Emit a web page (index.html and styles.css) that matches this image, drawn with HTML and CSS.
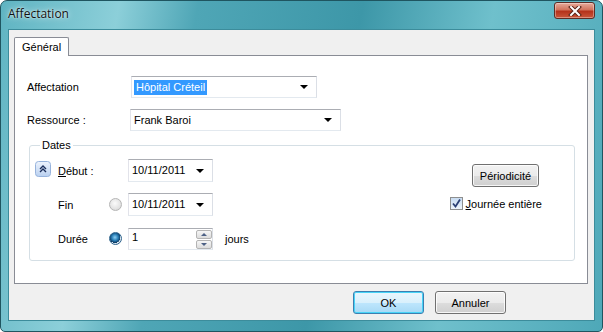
FILE: index.html
```html
<!DOCTYPE html>
<html lang="fr">
<head>
  <meta charset="UTF-8">
  <title>Affectation</title>
  <link rel="stylesheet" href="styles.css">
</head>
<body>
  <div class="window">
    <div class="titlebar">
      <span class="title">Affectation</span>
      <button class="close-btn" type="button">
        <svg width="14" height="10" viewBox="0 0 14 10">
          <path d="M3 1 L11 9 M11 1 L3 9" stroke="#5a2418" stroke-width="4" stroke-linecap="square"/>
          <path d="M3 1 L11 9 M11 1 L3 9" stroke="#fff" stroke-width="2" stroke-linecap="square"/>
        </svg>
      </button>
    </div>
    <div class="client">
      <div class="tabs">
        <div class="tab active">Général</div>
      </div>
      <div class="panel">
        <div class="field-row">
          <label class="field-label">Affectation</label>
          <div class="combo combo-affect">
            <span class="combo-text selected">Hôpital Créteil</span>
            <span class="arrow"></span>
          </div>
        </div>
        <div class="field-row row-ressource">
          <label class="field-label">Ressource :</label>
          <div class="combo combo-res">
            <span class="combo-text">Frank Baroi</span>
            <span class="arrow"></span>
          </div>
        </div>

        <fieldset class="group">
          <legend>Dates</legend>
          <div class="dates">
            <div class="date-grid">
              <span class="collapse-btn">
                <svg width="16" height="16" viewBox="0 0 16 16">
                  <defs>
                    <linearGradient id="cg" x1="0" y1="0" x2="0" y2="1">
                      <stop offset="0" stop-color="#eef4fd"/>
                      <stop offset="1" stop-color="#b9d0f0"/>
                    </linearGradient>
                  </defs>
                  <rect x="0.5" y="0.5" width="15" height="15" rx="3" fill="url(#cg)" stroke="#97b3dc"/>
                  <path d="M5 8 L8 5 L11 8 M5 11 L8 8 L11 11" fill="none" stroke="#1c2f5c" stroke-width="1.4"/>
                </svg>
              </span>
              <span class="date-label"><u>D</u>ébut :</span>
              <span></span>
              <div class="combo combo-date">
                <span class="combo-text">10/11/2011</span>
                <span class="arrow"></span>
              </div>
              <span></span>

              <span></span>
              <span class="date-label">Fin</span>
              <span class="radio"></span>
              <div class="combo combo-date">
                <span class="combo-text">10/11/2011</span>
                <span class="arrow"></span>
              </div>
              <span></span>

              <span></span>
              <span class="date-label">Durée</span>
              <span class="radio checked"></span>
              <div class="spin">
                <span class="combo-text">1</span>
                <span class="spin-btns">
                  <span class="spin-btn"><i class="up"></i></span>
                  <span class="spin-btn"><i class="down"></i></span>
                </span>
              </div>
              <span class="unit">jours</span>
            </div>

            <div class="date-side">
              <button class="btn btn-period" type="button">Périodicité</button>
              <label class="check">
                <span class="checkbox">
                  <svg width="11" height="11" viewBox="0 0 11 11">
                    <path d="M2 5.5 L4.5 8.5 L9 1.5" fill="none" stroke="#2b3f74" stroke-width="1.8"/>
                  </svg>
                </span>
                <span><u>J</u>ournée entière</span>
              </label>
            </div>
          </div>
        </fieldset>
      </div>
      <div class="footer">
        <button class="btn btn-default" type="button">OK</button>
        <button class="btn" type="button">Annuler</button>
      </div>
    </div>
  </div>
</body>
</html>
```

FILE: styles.css
```css
html, body { margin: 0; padding: 0; background: #fff; }
body { font-family: "Liberation Sans", Arial, sans-serif; font-size: 11px; color: #000; }

.window {
  box-sizing: border-box;
  width: 603px;
  height: 332px;
  display: flex;
  flex-direction: column;
  padding: 0 7px 10px 7px;
  border: 1px solid #1f5560;
  border-radius: 7px 7px 5px 5px;
  background: linear-gradient(100deg, #5fb4c2 0%, #8ccfd9 18%, #4fa6b6 30%, #3d97a8 55%, #6fc0cc 75%, #4ea8b8 100%);
}

.titlebar {
  height: 28px;
  display: flex;
  align-items: flex-start;
  justify-content: space-between;
}
.title {
  font-family: "Open Sans", "Liberation Sans", sans-serif;
  font-size: 12px;
  margin-top: 4px;
  color: #111;
  text-shadow: 0 0 6px rgba(255,255,255,0.9), 0 0 2px rgba(255,255,255,0.8);
}
.close-btn {
  width: 41px;
  height: 17px;
  margin-top: 1px;
  padding: 0;
  border: 1px solid #5e2d25;
  border-radius: 3px;
  background: linear-gradient(#e6ab9b 0%, #d2735c 45%, #b5321b 55%, #c9563a 100%);
  display: flex;
  align-items: center;
  justify-content: center;
  box-shadow: inset 0 0 0 1px rgba(255,255,255,0.35);
}

.client {
  flex: 1;
  display: flex;
  flex-direction: column;
  background: #f0f0f0;
  border: 1px solid #3c8c9b;
  padding: 7px 6px 0 5px;
}

.tabs { display: flex; height: 18px; position: relative; z-index: 1; }
.tab {
  box-sizing: border-box;
  width: 55px;
  height: 19px;
  padding: 3px 0 0 7px;
  background: #fff;
  border: 1px solid #898c95;
  border-bottom: none;
  border-radius: 2px 2px 0 0;
}

.panel {
  box-sizing: border-box;
  height: 229px;
  background: #fff;
  border: 1px solid #898c95;
  padding: 20px 0 0 12px;
}

.field-row { display: flex; align-items: center; height: 22px; }
.row-ressource { margin-top: 11px; }
.field-label { width: 104px; }
.row-ressource .field-label { width: 103px; }

.combo {
  box-sizing: border-box;
  height: 22px;
  display: flex;
  align-items: center;
  justify-content: space-between;
  background: #fff;
  border: 1px solid #abadb3;
  border-color: #abadb3 #dbdfe6 #e3e9ef #e2e3ea;
  padding: 0 0 0 2px;
}
.combo-affect { width: 186px; }
.combo-res { width: 211px; }
.combo-text { padding: 0 1px; line-height: 15px; }
.combo-text.selected { background: #3399ff; color: #fff; padding: 0 2px; }
.arrow {
  width: 0; height: 0;
  margin-right: 8px;
  border-left: 4px solid transparent;
  border-right: 4px solid transparent;
  border-top: 4px solid #000;
}

.group {
  box-sizing: border-box;
  width: 546px;
  height: 122px;
  margin: 8px 0 0 2px;
  padding: 8px 0 0 5px;
  border: 1px solid #d5dfe5;
  border-radius: 3px;
}
.group legend { padding: 0 2px; margin-left: 5px; }

.dates { display: flex; justify-content: space-between; }

.date-grid {
  display: grid;
  grid-template-columns: 23px 51px 19px 85px auto;
  grid-auto-rows: 23px;
  row-gap: 11px;
  align-items: center;
}
.collapse-btn { display: flex; align-self: start; margin-top: 2px; }
.combo-date { height: 23px; }
.combo-date .combo-text { padding-left: 1px; }
.unit { margin-left: 12px; }

.radio {
  box-sizing: border-box;
  width: 13px;
  height: 13px;
  border-radius: 50%;
  border: 1px solid #b5b5b5;
  background: radial-gradient(circle at 45% 40%, #fbfbfb 0%, #e3e3e3 60%, #cfcfcf 100%);
}
.radio.checked {
  border-color: #2c628b;
  background: radial-gradient(circle at 45% 40%, #8fd0f4 0%, #2a7fb7 35%, #0d3a63 60%, #e0e9f2 62%, #cfd8e2 100%);
}

.spin {
  box-sizing: border-box;
  height: 22px;
  display: flex;
  align-items: flex-start;
  justify-content: space-between;
  background: #fff;
  border: 1px solid #abadb3;
  border-color: #abadb3 #dbdfe6 #e3e9ef #e2e3ea;
  padding: 1px 0 0 2px;
}
.spin-btns { display: flex; flex-direction: column; gap: 1px; }
.spin-btn {
  box-sizing: border-box;
  width: 16px;
  height: 9px;
  border: 1px solid #b4b4b4;
  border-radius: 2px;
  background: linear-gradient(#f6f6f6, #dcdcdc);
  display: flex;
  align-items: center;
  justify-content: center;
}
.spin-btn i { width: 0; height: 0; border-left: 3px solid transparent; border-right: 3px solid transparent; }
.spin-btn .up { border-bottom: 3px solid #4d6185; }
.spin-btn .down { border-top: 3px solid #4d6185; }

.date-side {
  display: flex;
  flex-direction: column;
  align-items: flex-end;
  padding: 5px 32px 0 0;
}
.btn-period { width: 67px; margin-right: 3px; }
.check { display: flex; align-items: center; gap: 3px; margin-top: 10px; }
.checkbox {
  box-sizing: border-box;
  width: 13px;
  height: 13px;
  border: 1px solid #8e8f8f;
  background: linear-gradient(#c8dcf2, #eef4fb);
  display: flex;
  align-items: center;
  justify-content: center;
}

.btn {
  box-sizing: border-box;
  height: 23px;
  padding: 0;
  font-family: "Liberation Sans", Arial, sans-serif;
  font-size: 11px;
  color: #000;
  border: 1px solid #707070;
  border-radius: 3px;
  background: linear-gradient(#f2f2f2 0%, #ebebeb 50%, #dddddd 51%, #cfcfcf 100%);
  box-shadow: inset 0 0 0 1px rgba(255,255,255,0.8);
}

.footer {
  display: flex;
  justify-content: flex-end;
  gap: 11px;
  padding: 7px 82px 0 0;
}
.footer .btn { width: 71px; }
.btn-default {
  border-color: #3c7fb1;
  background: linear-gradient(#eaf6fd 0%, #d9f0fc 50%, #bee6fd 51%, #a7d9f5 100%);
  box-shadow: inset 0 0 0 1px #48d4f7;
}
```
